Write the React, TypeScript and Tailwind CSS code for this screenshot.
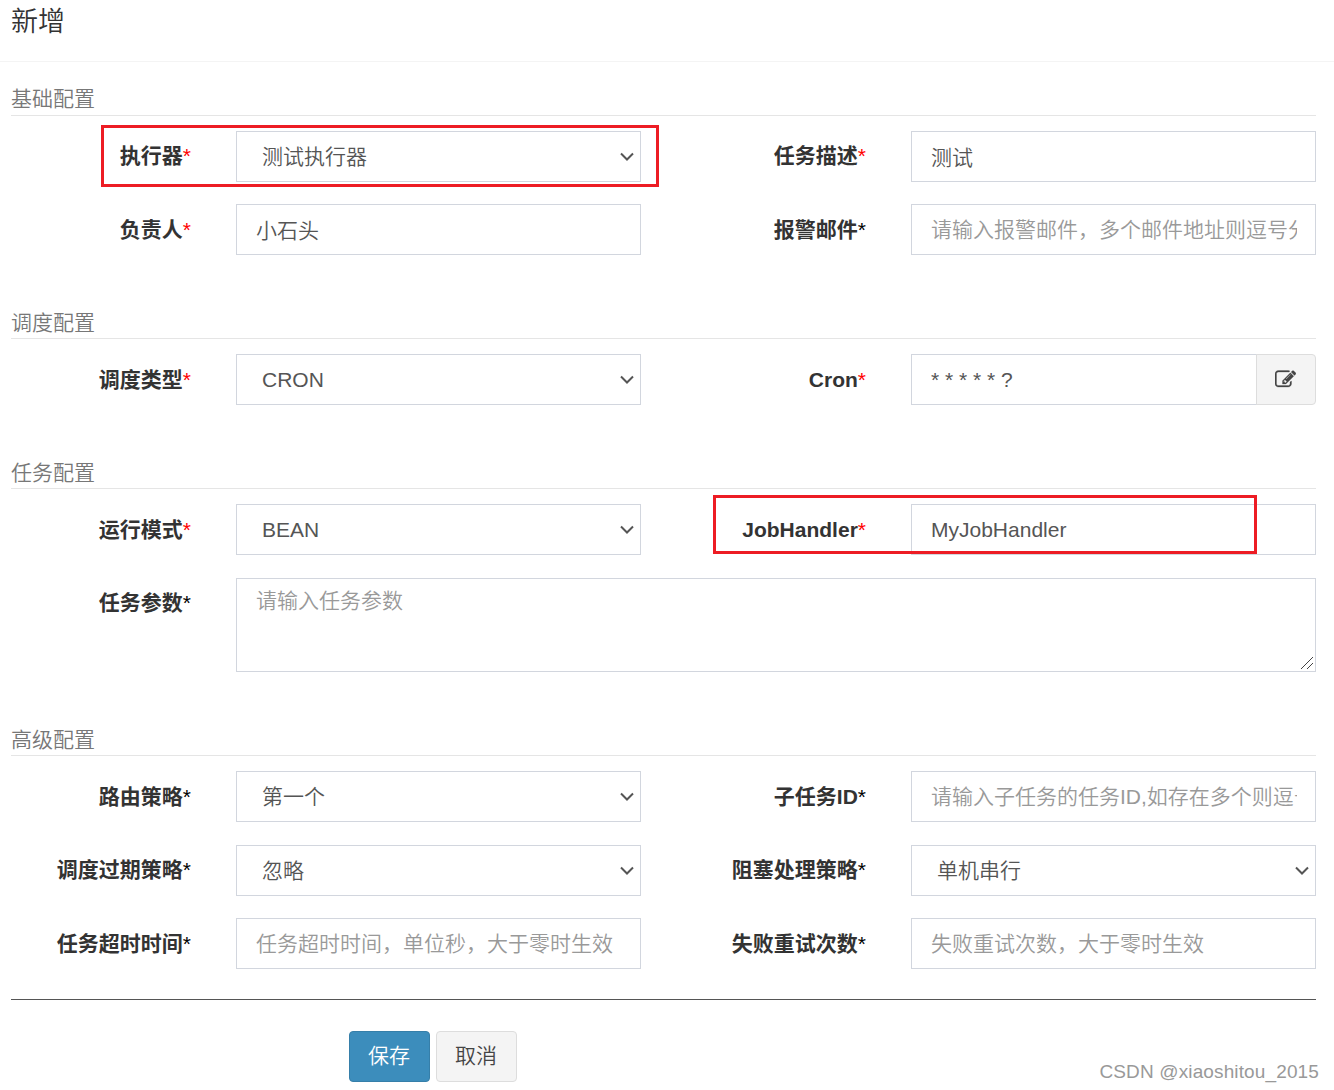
import type { ReactNode } from 'react'

type FieldProps = {
  label: string
  required?: boolean
  raised?: boolean
  children: ReactNode
}

const control =
  'h-[51px] w-full min-w-0 border border-[#d2d6de] bg-white text-[21px] font-[350] text-[#555] outline-none placeholder:text-[#999] placeholder:opacity-100'

function Field({ label, required, raised, children }: FieldProps) {
  return (
    <>
      <label
        className={`pr-[45px] text-right text-[21px] leading-[30px] font-bold text-[#333] ${
          raised ? 'pt-[10px]' : 'pt-[11px]'
        }`}
      >
        {label}
        <span className={`font-normal ${required ? 'text-[#f00]' : 'text-black'}`}>*</span>
      </label>
      {children}
    </>
  )
}

function TextInput({ value, placeholder }: { value?: string; placeholder?: string }) {
  return (
    <input
      type="text"
      defaultValue={value}
      placeholder={placeholder}
      className={`${control} pr-[18px] pl-[19px] ${value && !/^[\x20-\x7e]+$/.test(value) ? 'pb-[2px]' : ''}`}
    />
  )
}

function Select({ value }: { value: string }) {
  return (
    <div className="grid grid-cols-1 items-center">
      <select className={`${control} col-start-1 row-start-1 appearance-none px-[25px]`}>
        <option>{value}</option>
      </select>
      <svg
        className="pointer-events-none col-start-1 row-start-1 mr-[6px] justify-self-end"
        width="16"
        height="10"
        viewBox="0 0 16 10"
        fill="none"
        stroke="#555"
        strokeWidth="2"
      >
        <path d="M2 1.5 8 7.5 14 1.5" />
      </svg>
    </div>
  )
}

function Legend({ children, first }: { children: string; first?: boolean }) {
  return (
    <p
      className={`flex items-end border-b border-[#e5e5e5] text-[21px] leading-[30px] font-[350] text-[#777] ${
        first ? 'h-[54px] pb-px' : 'h-[84px]'
      }`}
    >
      {children}
    </p>
  )
}

function Row({ children }: { children: ReactNode }) {
  return <div className="relative grid grid-cols-[225px_405px_270px_405px]">{children}</div>
}

function EditIcon() {
  return (
    <svg className="mr-px" width="21" height="21" viewBox="0 0 1792 1792" fill="#444" stroke="#444" strokeWidth="24">
      <path d="M888 1184l116-116-152-152-116 116v56h96v96h56zm440-720q-16-16-33 1l-350 350q-17 17-1 33t33-1l350-350q17-17 1-33zm80 594v190q0 119-84.5 203.5t-203.5 84.5h-832q-119 0-203.5-84.5t-84.5-203.5v-832q0-119 84.5-203.5t203.5-84.5h832q63 0 117 25 15 7 18 23 3 17-9 29l-49 49q-14 14-32 8-23-6-45-6h-832q-66 0-113 47t-47 113v832q0 66 47 113t113 47h832q66 0 113-47t47-113v-126q0-13 9-22l64-64q15-15 35-7t20 29zm-96-738l288 288-672 672h-288v-288zm444 132l-92 92-288-288 92-92q28-28 68-28t68 28l152 152q28 28 28 68t-28 68z" />
    </svg>
  )
}

export default function App() {
  return (
    <div className="relative h-[1090px] w-[1334px] overflow-hidden bg-white font-['Liberation_Sans','Noto_Sans_CJK_SC',sans-serif]">
      <header className="h-[62px] border-b border-[#f4f4f4] pl-[11px]">
        <h4 className="pt-px text-[27px] leading-[42px] font-[350] text-[#333]">新增</h4>
      </header>

      <form className="ml-[11px] w-[1305px]" onSubmit={(e) => e.preventDefault()}>
        <Legend first>基础配置</Legend>
        <div className="flex flex-col gap-[22px] pt-[15px]">
          <Row>
            <Field label="执行器" required raised>
              <Select value="测试执行器" />
            </Field>
            <Field label="任务描述" required raised>
              <TextInput value="测试" />
            </Field>
            <div className="pointer-events-none absolute -top-[6px] left-[90px] h-[62px] w-[558px] border-3 border-[#ed1c24]" />
          </Row>
          <Row>
            <Field label="负责人" required>
              <TextInput value="小石头" />
            </Field>
            <Field label="报警邮件">
              <TextInput placeholder="请输入报警邮件，多个邮件地址则逗号分隔" />
            </Field>
          </Row>
        </div>

        <Legend>调度配置</Legend>
        <div className="pt-[15px]">
          <Row>
            <Field label="调度类型" required>
              <Select value="CRON" />
            </Field>
            <Field label="Cron" required>
              <div className="flex">
                <TextInput value="* * * * * ?" />
                <button
                  type="button"
                  className="-ml-px flex h-[51px] w-[60px] shrink-0 items-center justify-center rounded-r border border-[#ddd] bg-[#f4f4f4]"
                >
                  <EditIcon />
                </button>
              </div>
            </Field>
          </Row>
        </div>

        <Legend>任务配置</Legend>
        <div className="flex flex-col gap-[23px] pt-[15px]">
          <Row>
            <Field label="运行模式" required>
              <Select value="BEAN" />
            </Field>
            <Field label="JobHandler" required>
              <TextInput value="MyJobHandler" />
            </Field>
            <div className="pointer-events-none absolute -top-[9px] left-[702px] h-[59px] w-[544px] border-3 border-[#ed1c24]" />
          </Row>
          <div className="grid grid-cols-[225px_1080px]">
            <Field label="任务参数" raised>
              <div className="grid">
                <textarea
                  placeholder="请输入任务参数"
                  className="col-start-1 row-start-1 block h-[94px] w-full resize-none border border-[#d2d6de] px-[19px] py-[7px] text-[21px] leading-[30px] font-[350] text-[#555] outline-none placeholder:text-[#999]"
                />
                <svg
                  className="pointer-events-none col-start-1 row-start-1 mr-[3px] mb-[3px] self-end justify-self-end"
                  width="12"
                  height="12"
                  viewBox="0 0 12 12"
                  stroke="#444"
                >
                  <path d="M0 12 12 0M6 12 12 6" />
                </svg>
              </div>
            </Field>
          </div>
        </div>

        <Legend>高级配置</Legend>
        <div className="pt-[15px]">
          <Row>
            <Field label="路由策略">
              <Select value="第一个" />
            </Field>
            <Field label="子任务ID">
              <TextInput placeholder="请输入子任务的任务ID,如存在多个则逗号分隔" />
            </Field>
          </Row>
          <div className="mt-[23px] flex flex-col gap-[22px]">
            <Row>
              <Field label="调度过期策略" raised>
                <Select value="忽略" />
              </Field>
              <Field label="阻塞处理策略" raised>
                <Select value="单机串行" />
              </Field>
            </Row>
            <Row>
              <Field label="任务超时时间">
                <TextInput placeholder="任务超时时间，单位秒，大于零时生效" />
              </Field>
              <Field label="失败重试次数">
                <TextInput placeholder="失败重试次数，大于零时生效" />
              </Field>
            </Row>
          </div>
        </div>

        <hr className="mt-[30px] border-t border-[#555]" />

        <div className="mt-[31px] flex gap-[6px] pl-[338px] text-[21px] font-[350]">
          <button
            type="submit"
            className="h-[51px] w-[81px] rounded border border-[#367fa9] bg-[#3c8dbc] pr-px pb-[2px] text-white"
          >
            保存
          </button>
          <button
            type="button"
            className="h-[51px] w-[81px] rounded border border-[#ddd] bg-[#f4f4f4] pr-px pb-[2px] text-[#444]"
          >
            取消
          </button>
        </div>
      </form>

      <span className="absolute right-[15px] bottom-[4px] text-[19px] leading-[28px] tracking-[0.13px] whitespace-nowrap text-[#999]">
        CSDN @xiaoshitou_2015
      </span>
    </div>
  )
}
